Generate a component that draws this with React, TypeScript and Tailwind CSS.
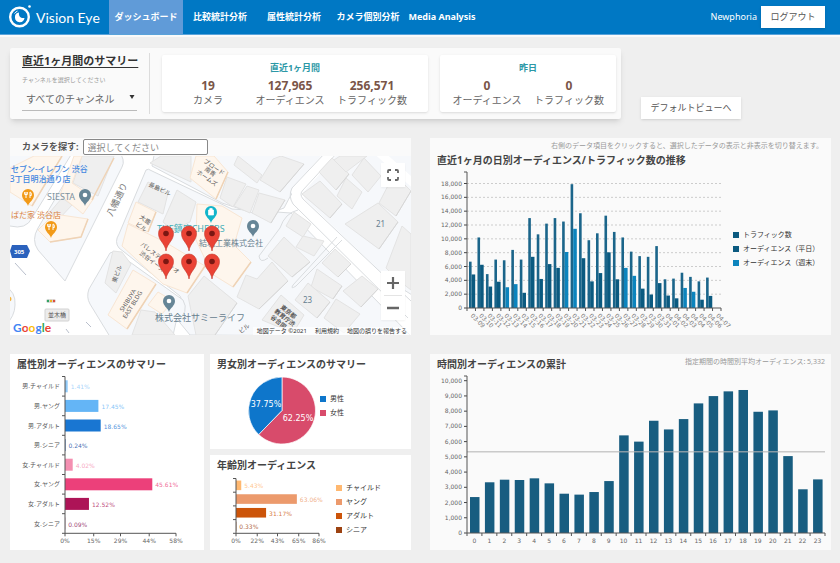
import { useState, type ReactNode } from 'react';

interface LegendItem {
  label: string;
  color: string;
}

interface BarRow {
  label: string;
  value: number;
  color: string;
}

const NAV_ITEMS = ['ダッシュボード', '比較統計分析', '属性統計分析', 'カメラ個別分析', 'Media Analysis'];

const TRAFFIC = [
  6700, 10200, 4900, 7000, 6900, 8400, 7000, 13000, 10650, 12200, 13000, 12500, 17900, 13700, 9800,
  10800, 13350, 11000, 10200, 8150, 7500, 7400, 8950, 4150, 4250, 5100, 4500, 3850, 4400
];

const AUDIENCE = [
  4850, 6250, 3100, 3800, 3000, 3450, 2200, 7400, 4200, 6350, 5800, 8100, 11450, 7200, 3850,
  5050, 8050, 4150, 5800, 4650, 2800, 1950, 3600, 1800, 1400, 2900, 2350, 1200, 1750
];

const HOURLY = [
  2360, 3330, 3500, 3480, 3590, 3260, 2580, 2520, 2690, 3410, 6410, 6000,
  7370, 6800, 7480, 8510, 8990, 9300, 9390, 7960, 8050, 5050, 2870, 3520
];
const HOURLY_AVERAGE = 5332;

const ATTRIBUTES: BarRow[] = [
  { label: '男.チャイルド', value: 1.41, color: '#90caf9' },
  { label: '男.ヤング', value: 17.45, color: '#64b5f6' },
  { label: '男.アダルト', value: 18.65, color: '#1976d2' },
  { label: '男.シニア', value: 0.24, color: '#0d47a1' },
  { label: '女.チャイルド', value: 4.02, color: '#f48fb1' },
  { label: '女.ヤング', value: 45.61, color: '#ec407a' },
  { label: '女.アダルト', value: 12.52, color: '#ad1457' },
  { label: '女.シニア', value: 0.09, color: '#880e4f' }
];

const AGES: BarRow[] = [
  { label: 'チャイルド', value: 5.43, color: '#ffb870' },
  { label: 'ヤング', value: 63.06, color: '#ec9a6c' },
  { label: 'アダルト', value: 31.17, color: '#cc5409' },
  { label: 'シニア', value: 0.33, color: '#9c4211' }
];

const CHART_TEXT = "font-['DejaVu_Sans','Noto_Sans_CJK_JP',sans-serif] text-[6px]";

function Logo() {
  return (
    <svg viewBox="0 0 24 26" className="h-[26px] w-6" aria-hidden="true">
      <circle cx="11.5" cy="13" r="9.3" fill="none" stroke="#fff" strokeWidth="2.4" />
      <path d="M11 8.600a4.800 4.800 0 1 0 5.500 5.400c-2.500.300-4.200-.2-5-1.700-.600-1.100-.700-2.400-.5-3.700z" fill="#fff" />
      <path d="M6.500 9.500a6.500 6.500 0 0 1 3-2.400" fill="none" stroke="#fff" strokeWidth="1" />
      <circle cx="21.5" cy="2.500" r="1.300" fill="#fff" />
    </svg>
  );
}

function CardTitle({ children }: { children: ReactNode }) {
  return <h2 className="text-[10px] leading-4 font-bold whitespace-nowrap text-[#444]">{children}</h2>;
}

function Legend({ items, className }: { items: LegendItem[]; className?: string }) {
  return (
    <ul className={className}>
      {items.map(item => (
        <li key={item.label} className="flex items-center gap-1 text-[7px] leading-3.5 whitespace-nowrap text-[#333]">
          <span className="size-1.5 shrink-0" style={{ backgroundColor: item.color }} />
          {item.label}
        </li>
      ))}
    </ul>
  );
}

function Stat({ value, label }: { value: string; label: string }) {
  return (
    <div className="flex flex-col-reverse text-center whitespace-nowrap">
      <dt className="text-[10px] leading-3 text-[#666]">{label}</dt>
      <dd className="text-[12px] leading-4 font-bold text-[#7a5548]">{value}</dd>
    </div>
  );
}

function Header() {
  const [active, setActive] = useState(0);

  return (
    <header className="flex h-[35px] items-stretch border-b border-[#5aa3da] bg-[#0078c4] text-white shadow-[0_2px_0_#fafafa]">
      <div className="flex w-[109px] shrink-0 items-center gap-1 pl-2">
        <Logo />
        <span className="font-['Lato',sans-serif] text-[14px] whitespace-nowrap">Vision Eye</span>
      </div>
      <nav className="flex">
        {NAV_ITEMS.map((item, i) => (
          <a
            key={item}
            href="#"
            onClick={() => setActive(i)}
            className={
              'flex w-[74px] items-center justify-center text-[9px] font-bold whitespace-nowrap ' +
              (active === i ? 'bg-[#609bd8]' : '')
            }
          >
            {item}
          </a>
        ))}
      </nav>
      <div className="ml-auto flex items-center gap-1 pr-[15px]">
        <span className="text-[9px]">Newphoria</span>
        <button type="button" className="h-[22px] w-16 bg-white text-[9px] text-[#555] shadow">
          ログアウト
        </button>
      </div>
    </header>
  );
}

function Summary() {
  return (
    <section className="flex items-end gap-5">
      <div className="flex gap-3 rounded-xs bg-[#fafafa] py-[5px] pr-[5px] pl-3 shadow-md">
        <div className="w-[115px]">
          <h1 className="text-[11px] leading-4 font-bold whitespace-nowrap text-[#333] underline underline-offset-2">
            直近1ヶ月間のサマリー
          </h1>
          <label htmlFor="channel" className="mt-1.5 block text-[6px] leading-[10px] text-[#999]">
            チャンネルを選択してください
          </label>
          <div className="relative">
            <select
              id="channel"
              className="h-[22px] w-full appearance-none border-b border-[#bbb] bg-transparent pl-1 text-[10px] text-[#666]"
            >
              <option>すべてのチャンネル</option>
            </select>
            <svg viewBox="0 0 6 4" className="pointer-events-none absolute top-2.5 right-0.5 h-1 w-1.5">
              <path d="M.5 0h5L3 4z" fill="#333" />
            </svg>
          </div>
        </div>
        <div className="w-px bg-[#dcdcdc]" />
        <div className="my-0.5 h-[57px] rounded-xs bg-white pt-[7px] pr-[15px] pl-[5px] shadow">
          <h3 className="pl-2.5 text-center text-[9px] leading-3 font-bold text-[#2c98a6]">直近1ヶ月間</h3>
          <dl className="mt-1 grid grid-cols-[repeat(3,82px)]">
            <Stat value="19" label="カメラ" />
            <Stat value="127,965" label="オーディエンス" />
            <Stat value="256,571" label="トラフィック数" />
          </dl>
        </div>
        <div className="my-0.5 h-[57px] rounded-xs bg-white px-1.5 pt-[7px] shadow">
          <h3 className="text-center text-[9px] leading-3 font-bold text-[#2c98a6]">昨日</h3>
          <dl className="mt-1 grid grid-cols-[repeat(2,82px)]">
            <Stat value="0" label="オーディエンス" />
            <Stat value="0" label="トラフィック数" />
          </dl>
        </div>
      </div>
      <button type="button" className="h-[22px] w-[100px] bg-white text-[9px] text-[#555] shadow">
        デフォルトビューへ
      </button>
    </section>
  );
}

const GREY_BUILDINGS = [
  '82,156 114,156 98,196 73,183',
  '62,198 72,205 58,220 50,212',
  '150,163 161,156 191,156 191,182',
  '148,182 168,193 163,214 138,202',
  '177,190 196,202 190,222 172,230 163,222',
  '113,251 122,252 131,264 116,293 105,283',
  '141,310 155,312 175,335 132,335',
  '188,296 204,276 237,303 215,335 196,335',
  '238,156 262,175 257,183 234,165',
  '273,159 281,156 304,164 280,192 260,180',
  '227,177 246,184 233,207 220,198',
  '247,186 259,190 250,213 234,206',
  '259,193 285,200 271,223 252,213',
  '294,212 311,224 303,237 286,226',
  '303,236 324,241 314,256 296,247',
  '284,237 310,262 292,277 268,256',
  '272,262 288,281 259,309 237,297 246,275 257,279',
  '335,249 351,264 338,277 322,263',
  '317,269 342,286 333,299 311,287',
  '308,283 330,302 317,318 295,300',
  '281,295 304,315 293,333 262,320',
  '362,276 378,289 361,307 343,291',
  '336,299 360,314 344,333 324,318',
  '320,181 342,204 330,218 302,194',
  '332,158 349,174 336,190 319,172',
  '346,178 362,192 352,209 337,196',
  '340,156 367,156 346,172 334,160',
  '364,158 381,176 368,192 352,175',
  '378,203 398,222 379,249 345,224',
  '394,174 411,191 396,216 379,203',
  '402,226 411,234 411,290 398,280 386,268'
];

const WARM_BUILDINGS = [
  '10,168 34,156 62,156 32,206 10,192',
  '74,156 82,156 72,183 94,198 83,214 60,195',
  '54,214 88,219 81,237 50,242 38,230',
  '196,156 214,156 228,172 216,199 190,178',
  '136,202 156,212 148,232 128,223',
  '197,204 222,206 242,218 234,245 251,262 233,287 212,274 196,240',
  '128,224 165,242 205,266 187,293 163,284 122,246',
  '133,270 156,284 127,329 108,315',
  '158,292 173,301 162,314 148,305'
];

interface PinProps {
  x: number;
  y: number;
  color: string;
  children?: ReactNode;
}

// x / y is the tip of the pin
function PlacePin({ x, y, color, children }: PinProps) {
  return (
    <g transform={`translate(${x} ${y})`}>
      <path d="M0 0C-1-4-6-6-6-11a6 6 0 0 1 12 0C6-6 1-4 0 0z" fill={color} />
      {children ?? <circle cy="-11" r="2.300" fill="#fff" />}
    </g>
  );
}

function Fork() {
  return <path d="M-2-14v6M-3.300-14v2.500h2.600V-14M2-8v-6c1 0 1.500 1.500 1.300 3.500H2" fill="none" stroke="#fff" strokeWidth="1" />;
}

function MapDrawing() {
  return (
    <svg viewBox="10 156 401 179" className="block h-auto w-full font-['Noto_Sans','Noto_Sans_CJK_JP',sans-serif]">
      <rect x="10" y="156" width="401" height="179" fill="#fff" />
      <g fill="#f6f8fb" stroke="#d9dcdf" strokeWidth="1">
        <path d="M5 150H74L32 218Q26 230 10 226Q4 225 5 220z" />
        <path d="M84 150H118Q126 160 122 167L65 281L38 250Q31 240 38 228z" />
        <path d="M146 170Q148 168 152 171L232 209L291 213L411 336H350L190 335L176 318Q188 308 180 296L119 248Q114 242 119 234z" />
        <path d="M155 150H330L294 190Q288 200 284 208L262 216L222 203L152 166z" />
        <path d="M336 150H420V300L385 278L303 198Q298 192 303 187z" />
        <path d="M110 253Q116 250 120 255L183 300Q190 312 176 322L172 340H112L90 304Q86 297 89 289z" />
        <path d="M5 286Q16 292 15 305Q15 316 5 326z" />
      </g>
      <g fill="none" stroke="#fff">
        <path d="M332 152L297 191L300 202L414 312" strokeWidth="11" strokeLinejoin="round" />
        <path d="M376 150L414 184" strokeWidth="8" />
      </g>
      <g fill="none" stroke="#d9dcdf" strokeWidth="1">
        <path d="M326 152L292 188Q288 196 293 204L408 318" />
        <path d="M338 152L303 190Q299 194 303 199L411 301" />
        <path d="M337 237L293 285Q290 290 296 286L342 240" />
        <path d="M298 210Q285 213 280 228L259 256Q260 264 268 258" />
        <path d="M15 263L26 275M66 329L69 333M86 322L91 327" stroke="#b9bfcc" />
      </g>
      <g fill="#efefef" stroke="#e3e3e3" strokeWidth="1">
        {GREY_BUILDINGS.map(points => (
          <polygon key={points} points={points} />
        ))}
      </g>
      <g fill="#fef6ed" stroke="#f8e6d4" strokeWidth="1">
        {WARM_BUILDINGS.map(points => (
          <polygon key={points} points={points} />
        ))}
      </g>
      <path
        d="M62 156L32 206M50 242L81 237L88 219M114 158L92 200M156 212L148 232M228 172L216 199M251 262L233 287M205 266L187 293M156 284L127 329"
        fill="none"
        stroke="#efd3b6"
        strokeWidth="1.500"
      />
      <path
        d="M342 204L330 218M349 174L336 190M398 222L379 249M411 191L396 216M351 264L338 277M342 286L333 299M330 302L317 318M378 289L361 307M310 262L292 277M288 281L259 309M304 164L280 192M285 200L271 223M237 303L215 335"
        fill="none"
        stroke="#d6d6d6"
      />

      <g fontSize="8" fill="#3f86e0" fontWeight="500">
        <text x="11" y="172">セブン-イレブン 渋谷</text>
        <text x="10" y="182">3丁目明治通り店</text>
      </g>
      <text x="11" y="218" fontSize="8" fill="#d9813b">ぱだ家 渋谷店</text>
      <text x="47" y="200" fontSize="9" fill="#8093a0">SIESTA</text>
      <text x="112" y="217" fontSize="9" fill="#777" transform="rotate(-64 112 217)">八幡通り</text>
      <g fontSize="6" fill="#555">
        <text x="148" y="186" transform="rotate(25 148 186)">長島ビル</text>
        <text x="139" y="218" transform="rotate(35 139 218)">大鹿</text>
        <text x="135" y="225" transform="rotate(35 135 225)">ビル</text>
        <text x="140" y="245" transform="rotate(38 140 245)">パレステュディオ</text>
        <text x="139" y="254" transform="rotate(38 139 254)">渋谷イースト</text>
        <text x="116" y="283" transform="rotate(-70 116 283)">東ビル</text>
        <text x="203" y="162" transform="rotate(35 203 162)">ブロード</text>
        <text x="204" y="170" transform="rotate(35 204 170)">南青</text>
        <text x="196" y="173" transform="rotate(35 196 173)">ホームズ</text>
        <text x="123" y="312" transform="rotate(-58 123 312)">SHIBUYA</text>
        <text x="126" y="319" transform="rotate(-58 126 319)">EAST BLDG</text>
        <g fontWeight="700">
          <text x="280" y="308" transform="rotate(38 280 308)">東京都</text>
          <text x="274" y="312" transform="rotate(38 274 312)">教育庁渋</text>
          <text x="270" y="318" transform="rotate(38 270 318)">谷合同</text>
        </g>
        <text x="241" y="334" transform="rotate(-40 241 334)">ビル</text>
      </g>
      <g fill="#67808f">
        <text x="155" y="321" fontSize="9">株式会社サミーライフ</text>
        <text x="199" y="246" fontSize="8">結城工業株式会社</text>
        <text x="376" y="227" fontSize="8">21</text>
        <text x="303" y="303" fontSize="8">23</text>
      </g>
      <text x="157" y="232" fontSize="9" fill="#45b0b8">THE鎮座CHEERS</text>

      <rect x="45" y="309" width="24" height="12" rx="1" fill="#ececec" stroke="#d2d2d2" />
      <text x="48" y="317" fontSize="6" fill="#555">並木橋</text>
      <rect x="46" y="299" width="10" height="4" rx="2" fill="#ddd" />
      <circle cx="48" cy="301" r="1.200" fill="#2da160" />
      <circle cx="51" cy="301" r="1.200" fill="#efb320" />
      <circle cx="54" cy="301" r="1.200" fill="#dc4a3c" />
      <path d="M12 245H27L30 251L27 258H12L10 251z" fill="#2b62bd" />
      <text x="14" y="254" fontSize="6" fontWeight="700" fill="#fff">305</text>
      <circle cx="9" cy="299" r="2.500" fill="#f5b440" />

      <PlacePin x={28} y={206} color="#f29a18"><Fork /></PlacePin>
      <PlacePin x={51} y={238} color="#f29a18"><Fork /></PlacePin>
      <PlacePin x={85} y={206} color="#668596" />
      <PlacePin x={169} y={312} color="#668596" />
      <PlacePin x={253} y={237} color="#668596" />
      <PlacePin x={211} y={223} color="#12b5cb">
        <path d="M-2.500-13h5v5h-5zM-1.200-13v-1.500h2.400v1.500" fill="#fff" stroke="#fff" strokeWidth=".7" />
      </PlacePin>

      {[251, 279].map(y =>
        [166, 189, 212].map(x => (
          <g key={`${x}-${y}`} transform={`translate(${x} ${y})`}>
            <path d="M0 0C-1-8-7.500-10-7.500-17.500a7.500 7.500 0 0 1 15 0C7.500-10 1-8 0 0z" fill="#ea4335" stroke="#c5372c" strokeWidth=".6" />
            <circle cy="-17.500" r="2.800" fill="#7a1712" />
          </g>
        ))
      )}

      <text x="13" y="332" fontSize="12" className="font-['Lato',sans-serif]" fontWeight="700" stroke="#fff" strokeWidth="2" paintOrder="stroke">
        <tspan fill="#4285f4">G</tspan>
        <tspan fill="#ea4335">o</tspan>
        <tspan fill="#fbbc05">o</tspan>
        <tspan fill="#4285f4">g</tspan>
        <tspan fill="#34a853">l</tspan>
        <tspan fill="#ea4335">e</tspan>
      </text>
    </svg>
  );
}

function MapCard() {
  return (
    <section className="bg-[#fafafa]">
      <div className="flex h-[18px] items-center gap-1 pl-3">
        <label htmlFor="camera" className="text-[9px] font-bold whitespace-nowrap text-[#555]">
          カメラを探す:
        </label>
        <input
          id="camera"
          type="text"
          placeholder="選択してください"
          className="h-4 w-[125px] rounded-xs border border-[#888] bg-white px-1 text-[9px] placeholder:text-[#888]"
        />
      </div>
      <div className="relative">
        <MapDrawing />
        <button
          type="button"
          aria-label="全画面表示"
          className="absolute top-[7px] right-1.5 flex size-6 items-center justify-center bg-white shadow-xs"
        >
          <svg viewBox="0 0 12 12" className="size-3">
            <path d="M1 4V2q0-1 1-1h2M8 1h2q1 0 1 1v2M11 8v2q0 1-1 1H8M4 11H2q-1 0-1-1V8" fill="none" stroke="#666" strokeWidth="1.800" />
          </svg>
        </button>
        <div className="absolute right-1.5 bottom-[15px] flex w-6 flex-col items-center bg-white shadow-xs">
          <button type="button" aria-label="拡大" className="flex size-6 items-center justify-center">
            <svg viewBox="0 0 12 12" className="size-3">
              <path d="M6 0v12M0 6h12" stroke="#666" strokeWidth="2.200" />
            </svg>
          </button>
          <div className="h-px w-[18px] bg-[#e4e4e4]" />
          <button type="button" aria-label="縮小" className="flex size-6 items-center justify-center">
            <svg viewBox="0 0 12 12" className="size-3">
              <path d="M0 6h12" stroke="#666" strokeWidth="2.500" />
            </svg>
          </button>
        </div>
        <div className="absolute right-0 bottom-0 flex gap-2 bg-white/70 px-1 text-[6px] leading-2 whitespace-nowrap text-[#333]">
          <span>地図データ ©2021</span>
          <a href="#">利用規約</a>
          <a href="#">地図の誤りを報告する</a>
        </div>
      </div>
    </section>
  );
}

function dayLabel(index: number) {
  const day = 9 + index;
  const [month, date] = day > 31 ? [4, day - 31] : [3, day];
  return `0${month}-${String(date).padStart(2, '0')}`;
}

function DailyChart() {
  const left = 467;
  const base = 308;
  const band = 254 / 30;
  const scale = 124.5 / 18000;

  return (
    <svg viewBox="430 168 300 167" className={`block h-auto min-w-0 flex-1 overflow-visible ${CHART_TEXT}`}>
      {Array.from({ length: 10 }, (_, i) => {
        const y = base - i * 2000 * scale;
        return (
          <g key={i}>
            {i > 0 && <line x1={left} x2={left + 254} y1={y} y2={y} stroke="#ccc" strokeDasharray="2 2" />}
            <line x1={left - 3} x2={left} y1={y} y2={y} stroke="#444" />
            <text x={left - 5} y={y + 2} textAnchor="end" fill="#666">{(i * 2000).toLocaleString('en-US')}</text>
          </g>
        );
      })}
      {TRAFFIC.map((value, i) => {
        const weekend = i % 7 === 4 || i % 7 === 5;
        const x = left + i * band + 2;
        return (
          <g key={i}>
            <rect x={x} y={base - value * scale} width="2.600" height={value * scale} fill="#1b658a" />
            <rect
              x={x + 2.6}
              y={base - AUDIENCE[i] * scale}
              width="3.600"
              height={AUDIENCE[i] * scale}
              fill={weekend ? '#0c84bd' : '#0b5a80'}
            />
          </g>
        );
      })}
      <path d={`M${left - 3} 172H${left}V${base}H${left + 254}v3`} fill="none" stroke="#555" />
      {Array.from({ length: 30 }, (_, i) => {
        const x = left + (i + 0.5) * band - 1;
        return (
          <g key={i}>
            <line x1={left + i * band} x2={left + i * band} y1={base} y2={base + 3} stroke="#555" />
            <text x={x} y={base + 8} transform={`rotate(45 ${x} ${base + 8})`} fill="#777">{dayLabel(i)}</text>
          </g>
        );
      })}
    </svg>
  );
}

function HourlyChart() {
  const left = 467;
  const base = 533;
  const band = 358 / 24;
  const scale = 152.3 / 10000;
  const averageY = base - HOURLY_AVERAGE * scale;

  return (
    <svg viewBox="430 372 401 178" className={`block h-auto w-full ${CHART_TEXT}`}>
      {Array.from({ length: 11 }, (_, i) => {
        const y = base - i * 1000 * scale;
        return (
          <g key={i}>
            <line x1={left - 3} x2={left} y1={y} y2={y} stroke="#444" />
            <text x={left - 5} y={y + 2} textAnchor="end" fill="#666">{(i * 1000).toLocaleString('en-US')}</text>
          </g>
        );
      })}
      {HOURLY.map((value, i) => (
        <g key={i}>
          <rect x={left + i * band + 3} y={base - value * scale} width="9.500" height={value * scale} fill="#185d80" />
          <line x1={left + i * band} x2={left + i * band} y1={base} y2={base + 3} stroke="#555" />
          <text x={left + (i + 0.5) * band} y={base + 10} textAnchor="middle" fill="#666">{i}</text>
        </g>
      ))}
      <line x1={left} x2={left + 358} y1={averageY} y2={averageY} stroke="#b5b5b5" strokeOpacity=".7" strokeWidth="1.500" />
      <path d={`M${left - 3} 376H${left}V${base}H${left + 358}v3`} fill="none" stroke="#555" />
    </svg>
  );
}

interface HorizontalBarsProps {
  rows: BarRow[];
  ticks: number[];
  left: number;
  top: number;
  band: number;
  barHeight: number;
  width: number;
  showLabels?: boolean;
}

function HorizontalBars({ rows, ticks, left, top, band, barHeight, width, showLabels }: HorizontalBarsProps) {
  const max = ticks[ticks.length - 1];
  const base = top + rows.length * band;

  return (
    <>
      {rows.map((row, i) => {
        const center = top + (i + 0.5) * band;
        const length = (row.value / max) * width;
        return (
          <g key={row.label}>
            <rect x={left} y={center - barHeight / 2} width={length} height={barHeight} fill={row.color} />
            <text x={left + length + 3} y={center + 3} fill={row.color} fillOpacity=".8">{row.value}%</text>
            <line x1={left - 3} x2={left} y1={top + i * band} y2={top + i * band} stroke="#555" />
            {showLabels && <text x={left - 5} y={center + 2} textAnchor="end" fill="#555">{row.label}</text>}
          </g>
        );
      })}
      <path d={`M${left} ${top}V${base}H${left + width}M${left - 3} ${base}H${left}`} fill="none" stroke="#555" />
      {ticks.map(tick => {
        const x = left + (tick / max) * width;
        return (
          <g key={tick}>
            <line x1={x} x2={x} y1={base} y2={base + 3} stroke="#555" />
            <text x={x} y={base + 10} textAnchor="middle" fill="#666">{tick}%</text>
          </g>
        );
      })}
    </>
  );
}

function GenderPie() {
  const r = 33.5;
  const angle = 0.6225 * 2 * Math.PI;
  const x = 282 + r * Math.sin(angle);
  const y = 410.5 - r * Math.cos(angle);

  return (
    <svg viewBox="210 372 110 77" className="block h-auto min-w-0 flex-1 font-['DejaVu_Sans',sans-serif] text-[8px]">
      <g stroke="#fff" strokeWidth=".7">
        <path d={`M282 410.500V${410.5 - r}A${r} ${r} 0 1 1 ${x} ${y}z`} fill="#d84b6b" />
        <path d={`M282 410.500L${x} ${y}A${r} ${r} 0 0 1 282 ${410.5 - r}z`} fill="#0e76cb" />
      </g>
      <g fill="#fff" textAnchor="middle">
        <text x="266" y="407">37.75%</text>
        <text x="298" y="421">62.25%</text>
      </g>
    </svg>
  );
}

export default function App() {
  return (
    <div className="min-h-screen bg-[#efefef] font-['Noto_Sans','Noto_Sans_CJK_JP',sans-serif]" lang="ja">
      <Header />
      <main className="flex flex-col gap-[19px] pt-[13px] pr-[9px] pb-[13px] pl-[10px]">
        <Summary />

        <div className="grid grid-cols-2 gap-[19px]">
          <MapCard />

          <section className="bg-[#fafafa] pt-0.5">
            <p className="pr-2 text-right text-[7px] leading-3 whitespace-nowrap text-[#999]">
              右側のデータ項目をクリックすると、選択したデータの表示と非表示を切り替えます。
            </p>
            <div className="pl-[7px]">
              <CardTitle>直近1ヶ月の日別オーディエンス/トラフィック数の推移</CardTitle>
            </div>
            <div className="flex items-start">
              <DailyChart />
              <Legend
                className="w-[101px] shrink-0 pt-[60px] pl-[3px]"
                items={[
                  { label: 'トラフィック数', color: '#0b5a80' },
                  { label: 'オーディエンス（平日）', color: '#0b5a80' },
                  { label: 'オーディエンス（週末）', color: '#0c84bd' }
                ]}
              />
            </div>
          </section>

          <div className="grid grid-cols-[194fr_201fr] gap-1.5">
            <section className="bg-white pt-0.5">
              <div className="pl-[7px]">
                <CardTitle>属性別オーディエンスのサマリー</CardTitle>
              </div>
              <svg viewBox="10 372 194 178" className={`block h-auto w-full ${CHART_TEXT}`}>
                <HorizontalBars
                  rows={ATTRIBUTES}
                  ticks={[0, 15, 29, 44, 58]}
                  left={65}
                  top={376.5}
                  band={19.6}
                  barHeight={12}
                  width={111}
                  showLabels
                />
              </svg>
            </section>

            <div className="flex flex-col gap-1.5">
              <section className="bg-white pt-0.5">
                <div className="pl-[7px]">
                  <CardTitle>男女別オーディエンスのサマリー</CardTitle>
                </div>
                <div className="flex items-start">
                  <GenderPie />
                  <Legend
                    className="w-[91px] shrink-0 pt-5"
                    items={[
                      { label: '男性', color: '#0e76cb' },
                      { label: '女性', color: '#d84b6b' }
                    ]}
                  />
                </div>
              </section>
              <section className="bg-white pt-0.5">
                <div className="pl-[7px]">
                  <CardTitle>年齢別オーディエンス</CardTitle>
                </div>
                <div className="flex items-start">
                  <svg viewBox="210 473 120 77" className={`block h-auto min-w-0 flex-1 ${CHART_TEXT}`}>
                    <HorizontalBars
                      rows={AGES}
                      ticks={[0, 22, 43, 65, 86]}
                      left={236}
                      top={478.5}
                      band={13.7}
                      barHeight={9.6}
                      width={83}
                    />
                  </svg>
                  <Legend className="w-[81px] shrink-0 pt-2 pl-[6px]" items={AGES} />
                </div>
              </section>
            </div>
          </div>

          <section className="bg-[#fafafa] pt-0.5">
            <div className="flex justify-between pr-[6px] pl-[7px]">
              <CardTitle>時間別オーディエンスの累計</CardTitle>
              <p className="text-[7px] leading-3 whitespace-nowrap text-[#999]">
                指定期間の時間別平均オーディエンス: {HOURLY_AVERAGE.toLocaleString('en-US')}
              </p>
            </div>
            <HourlyChart />
          </section>
        </div>
      </main>
    </div>
  );
}
